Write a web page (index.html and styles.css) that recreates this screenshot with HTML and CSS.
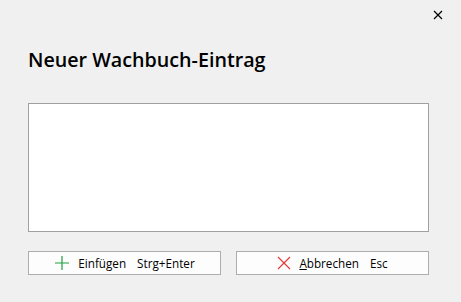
FILE: index.html
```html
<!DOCTYPE html>
<html lang="de">
<head>
    <meta charset="UTF-8">
    <title>Neuer Wachbuch-Eintrag</title>
    <link rel="stylesheet" href="styles.css">
</head>
<body>
    <div class="dialog">
        <div class="titlebar">
            <button class="close" type="button" aria-label="Schließen">
                <svg width="10" height="10" viewBox="0 0 10 10">
                    <path d="M1 1L9 9M9 1L1 9" stroke="#000" stroke-width="1.2" fill="none"/>
                </svg>
            </button>
        </div>
        <h1 class="dialog-title">Neuer Wachbuch-Eintrag</h1>
        <textarea class="entry"></textarea>
        <div class="actions">
            <button class="action" type="button">
                <svg width="16" height="16" viewBox="0 0 16 16">
                    <path d="M8 1V15M1 8H15" stroke="#1fa040" stroke-width="1.2" fill="none"/>
                </svg>
                <span>Einfügen</span>
                <span class="shortcut">Strg+Enter</span>
            </button>
            <button class="action" type="button">
                <svg width="14" height="14" viewBox="0 0 14 14">
                    <path d="M1 1L13 13M13 1L1 13" stroke="#e03c3c" stroke-width="1.2" fill="none"/>
                </svg>
                <span><u>A</u>bbrechen</span>
                <span class="shortcut">Esc</span>
            </button>
        </div>
    </div>
</body>
</html>
```

FILE: styles.css
```css
body {
    margin: 0;
    background-color: #f0f0f0;
    font-family: "Open Sans", "Noto Sans", sans-serif;
    color: #000;
}
.dialog {
    width: 461px;
    height: 302px;
    display: flex;
    flex-direction: column;
    padding: 0 32px 0 28px;
    box-sizing: border-box;
}
.titlebar {
    height: 30px;
    display: flex;
    justify-content: flex-end;
    align-items: center;
    margin-right: -32px;
}
.close {
    width: 46px;
    height: 30px;
    border: none;
    background: none;
    display: flex;
    align-items: center;
    justify-content: center;
    padding: 0;
}
.dialog-title {
    font-size: 19.7px;
    font-weight: 600;
    line-height: 28px;
    margin: 16px 0 0 0;
}
.entry {
    margin-top: 29px;
    width: 401px;
    height: 129px;
    box-sizing: border-box;
    border: 1px solid #a0a0a0;
    background-color: #fff;
    resize: none;
    outline: none;
}
.actions {
    display: flex;
    gap: 15px;
    margin-top: 19px;
}
.action {
    width: 193px;
    height: 24px;
    box-sizing: border-box;
    border: 1px solid #adadad;
    background-color: #fdfdfd;
    display: flex;
    align-items: center;
    justify-content: center;
    gap: 8px;
    font-family: "Open Sans", "Noto Sans", sans-serif;
    font-size: 11.7px;
    color: #000;
    padding: 0;
}
.action .shortcut {
    margin-left: 3px;
}
```
